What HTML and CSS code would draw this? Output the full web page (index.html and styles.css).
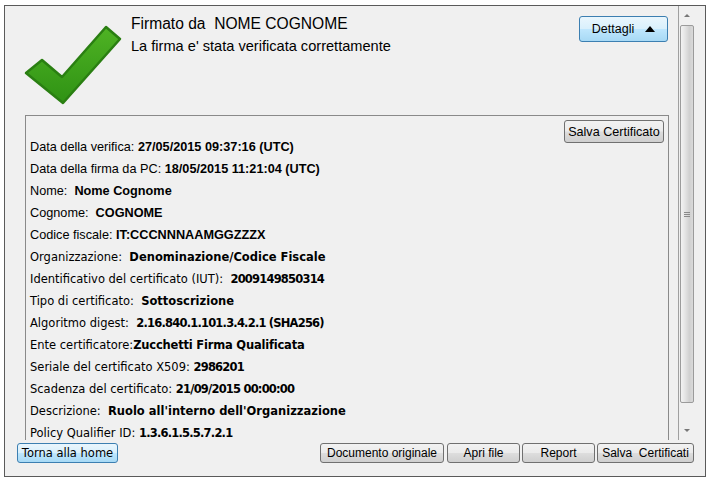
FILE: index.html
```html
<!DOCTYPE html>
<html lang="it">
<head>
<meta charset="utf-8">
<title>Verifica firma</title>
<link rel="stylesheet" href="styles.css">
</head>
<body>
<div class="frame">
  <div class="main">
    <div class="pane">
      <div class="header">
        <svg class="check" width="102" height="84" viewBox="22 22 102 84">
          <defs>
            <linearGradient id="g" x1="0" y1="0" x2="0" y2="1">
              <stop offset="0" stop-color="#4fb324"/>
              <stop offset="1" stop-color="#2f9214"/>
            </linearGradient>
          </defs>
          <polygon points="26,72 42,59 62,76 106,26 120,38 63,102" fill="url(#g)" stroke="#2a7f12" stroke-width="2.5" stroke-linejoin="round"/>
        </svg>
        <div class="titles">
          <div class="title">Firmato da  NOME COGNOME</div>
          <div class="subtitle">La firma e' stata verificata correttamente</div>
        </div>
        <button class="btn btn-blue dettagli">Dettagli<span class="tri"></span></button>
      </div>
      <div class="details">
        <div class="details-top"><button class="btn save-cert">Salva Certificato</button></div>
        <div class="rows">
          <div class="row a">Data della verifica: <b>27/05/2015 09:37:16 (UTC)</b></div>
          <div class="row a">Data della firma da PC: <b>18/05/2015 11:21:04 (UTC)</b></div>
          <div class="row a">Nome:  <b>Nome Cognome</b></div>
          <div class="row a">Cognome:  <b>COGNOME</b></div>
          <div class="row a">Codice fiscale: <b>IT:CCCNNNAAMGGZZZX</b></div>
          <div class="row t">Organizzazione:  <b>Denominazione/Codice Fiscale</b></div>
          <div class="row t">Identificativo del certificato (IUT):  <b class="n">2009149850314</b></div>
          <div class="row t">Tipo di certificato:  <b>Sottoscrizione</b></div>
          <div class="row t">Algoritmo digest:  <b class="n">2.16.840.1.101.3.4.2.1 (SHA256)</b></div>
          <div class="row t">Ente certificatore:<b class="s">Zucchetti Firma Qualificata</b></div>
          <div class="row t">Seriale del certificato X509: <b class="n">2986201</b></div>
          <div class="row t">Scadenza del certificato: <b class="n">21/09/2015 00:00:00</b></div>
          <div class="row t">Descrizione:  <b>Ruolo all'interno dell'Organizzazione</b></div>
          <div class="row t">Policy Qualifier ID: <b class="n">1.3.6.1.5.5.7.2.1</b></div>
        </div>
      </div>
    </div>
    <div class="scrollbar">
      <div class="sb-btn"><span class="arrow-up"></span></div>
      <div class="thumb"><span class="grip"></span></div>
      <div class="sb-space"></div>
      <div class="sb-btn"><span class="arrow-down"></span></div>
    </div>
  </div>
  <div class="bottom">
    <button class="btn btn-blue home">Torna alla home</button>
    <div class="actions">
      <button class="btn w-doc">Documento originale</button>
      <button class="btn w-apri">Apri file</button>
      <button class="btn w-rep">Report</button>
      <button class="btn w-salva">Salva  Certificati</button>
    </div>
  </div>
</div>
</body>
</html>
```

FILE: styles.css
```css
html, body {
  margin: 0;
  padding: 0;
  background: #ffffff;
}

body {
  font-family: "Liberation Sans", Arial, sans-serif;
  color: #000;
}

.frame {
  margin: 5px 0 0 4px;
  width: 700px;
  height: 470px;
  border: 1px solid #5a5a5a;
  background: #f0f0f0;
  display: flex;
  flex-direction: column;
}

.main {
  display: flex;
  height: 434px;
}

.pane {
  width: 672px;
  padding: 0 8px 0 20px;
  box-sizing: border-box;
  overflow: hidden;
}

.header {
  display: flex;
  align-items: flex-start;
  height: 109px;
}

.check {
  display: block;
  margin: 17px 0 0 -3px;
}

.titles {
  margin: 8px 0 0 7px;
}

.title {
  font-size: 15.6px;
  line-height: 20px;
  white-space: pre;
}

.subtitle {
  font-size: 14.6px;
  line-height: 20px;
  margin-top: 2px;
}

.btn {
  font-family: "Liberation Sans", Arial, sans-serif;
  font-size: 12px;
  color: #000;
  border: 1px solid #707070;
  border-radius: 3px;
  background: linear-gradient(#f2f2f2 0%, #ebebeb 48%, #dddddd 52%, #cfcfcf 100%);
  padding: 0;
  margin: 0;
  height: 20px;
  box-sizing: border-box;
  white-space: pre;
  display: inline-flex;
  align-items: center;
  justify-content: center;
}

.btn-blue {
  border-color: #3c7fb1;
  background: linear-gradient(#eaf6fd 0%, #d9f0fc 48%, #bee6fd 52%, #a7d9f5 100%);
}

.dettagli {
  margin: 10px 1px 0 auto;
  width: 89px;
  height: 26px;
  font-size: 12.5px;
}

.tri {
  display: inline-block;
  width: 0;
  height: 0;
  margin-left: 11px;
  border-left: 5px solid transparent;
  border-right: 5px solid transparent;
  border-bottom: 6px solid #000;
}

.details {
  height: 325px;
  border: 1px solid #8a8a8a;
  border-bottom: none;
  box-sizing: border-box;
  overflow: hidden;
  padding: 4px 4px 0 4px;
}

.details-top {
  display: flex;
  justify-content: flex-end;
}

.save-cert {
  width: 100px;
  height: 23px;
  font-size: 12.6px;
}

.rows {
  margin-top: -7px;
}

.row {
  height: 22px;
  line-height: 22px;
  white-space: pre;
}

.row.a {
  font-family: "Liberation Sans", Arial, sans-serif;
  font-size: 12.7px;
}

.row.t {
  font-family: "DejaVu Sans", Tahoma, sans-serif;
  font-size: 11.5px;
}

.row.t .n {
  letter-spacing: -0.8px;
}

.row.t .s {
  letter-spacing: -0.2px;
}

.scrollbar {
  width: 17px;
  margin-left: 1px;
  border-left: 1px solid #a0a0a0;
  box-sizing: border-box;
  display: flex;
  flex-direction: column;
}

.sb-btn {
  height: 19px;
  display: flex;
  align-items: center;
  justify-content: center;
}

.arrow-up {
  width: 0;
  height: 0;
  border-left: 3px solid transparent;
  border-right: 3px solid transparent;
  border-bottom: 3px solid #777;
}

.arrow-down {
  width: 0;
  height: 0;
  border-left: 3px solid transparent;
  border-right: 3px solid transparent;
  border-top: 3px solid #777;
}

.thumb {
  width: 14px;
  margin-left: 1px;
  height: 378px;
  box-sizing: border-box;
  border: 1px solid #9b9b9b;
  border-radius: 2px;
  background: linear-gradient(to right, #f2f2f2 0%, #e6e6e6 30%, #d0d0d0 70%, #dadada 100%);
  display: flex;
  align-items: center;
  justify-content: center;
}

.grip {
  width: 6px;
  height: 5px;
  background: repeating-linear-gradient(#8a8a8a 0 1px, transparent 1px 2px);
}

.sb-space {
  flex: 1;
}

.bottom {
  display: flex;
  align-items: flex-start;
  padding-top: 3px;
}

.home {
  margin-left: 12px;
  width: 101px;
  font-family: "DejaVu Sans", Tahoma, sans-serif;
  font-size: 11.5px;
}

.actions {
  margin-left: auto;
  margin-right: 11px;
  display: flex;
}

.w-doc { width: 124px; }
.w-apri { width: 73px; margin-left: 3px; }
.w-rep { width: 73px; margin-left: 2px; }
.w-salva { width: 97px; margin-left: 2px; }
```
